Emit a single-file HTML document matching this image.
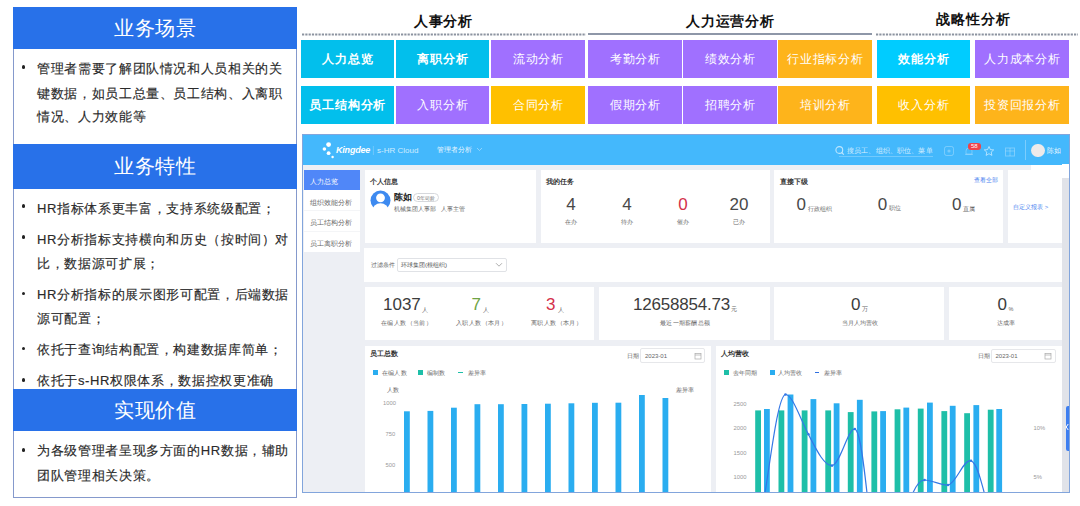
<!DOCTYPE html>
<html><head><meta charset="utf-8">
<style>
*{margin:0;padding:0;box-sizing:border-box}
html,body{width:1080px;height:506px;overflow:hidden;background:#fff;font-family:"Liberation Sans",sans-serif}
.a{position:absolute;white-space:nowrap}
/* left panel */
#lp{position:absolute;left:13px;top:7px;width:284px;height:491px;border:1px solid #8599CC;background:#fff}
.hd{position:absolute;left:13px;width:284px;background:#2871E9;color:#fff;font-size:20px;text-align:center;letter-spacing:0.5px;text-indent:0.5px}
.ln{position:absolute;left:37px;font-size:13px;color:#2a2a2a;-webkit-text-stroke:0.15px #2a2a2a;white-space:nowrap;line-height:16px;height:16px;letter-spacing:0.65px}
.bu{position:absolute;left:21px;width:5px;height:5px}
.bu::before{content:"";position:absolute;left:0.75px;top:-0.75px;width:3.5px;height:3.5px;border-radius:50%;background:#222}
/* tabs */
.sec{position:absolute;top:11px;font-size:14.5px;font-weight:bold;color:#111;text-align:center;white-space:nowrap;line-height:18px}
.tb{position:absolute;height:38px;color:#fff;font-size:12px;text-align:center;line-height:38px;white-space:nowrap;letter-spacing:0.7px;text-indent:0.7px}
.l6{letter-spacing:-0.35px}
.c{background:#02BFEC;font-weight:bold}
.p{background:#A070FF}
.o{background:#FEB41B}
.y{background:#FFC000}
</style></head><body>
<div id="lp"></div>
<div class="hd" style="top:7px;height:42px;line-height:42px">业务场景</div>
<div class="bu" style="top:66px"></div>
<div class="ln" style="top:61px">管理者需要了解团队情况和人员相关的关</div>
<div class="ln" style="top:85.5px">键数据，如员工总量、员工结构、入离职</div>
<div class="ln" style="top:109px">情况、人力效能等</div>

<div class="hd" style="top:144px;height:45px;line-height:45px">业务特性</div>
<div class="bu" style="top:205px"></div>
<div class="ln" style="top:200.5px">HR指标体系更丰富，支持系统级配置；</div>
<div class="bu" style="top:236px"></div>
<div class="ln" style="top:231.5px">HR分析指标支持横向和历史（按时间）对</div>
<div class="ln" style="top:256px">比，数据源可扩展；</div>
<div class="bu" style="top:292.5px"></div>
<div class="ln" style="top:287px">HR分析指标的展示图形可配置，后端数据</div>
<div class="ln" style="top:311px">源可配置；</div>
<div class="bu" style="top:347.5px"></div>
<div class="ln" style="top:342px">依托于查询结构配置，构建数据库简单；</div>
<div class="bu" style="top:379px"></div>
<div class="ln" style="top:373px">依托于s-HR权限体系，数据控权更准确</div>

<div class="hd" style="top:389px;height:42px;line-height:42px">实现价值</div>
<div class="bu" style="top:449px"></div>
<div class="ln" style="top:443px">为各级管理者呈现多方面的HR数据，辅助</div>
<div class="ln" style="top:467.5px">团队管理相关决策。</div>

<!-- section titles -->
<div class="sec" style="left:301px;width:284px;top:12px;font-size:14px;letter-spacing:0.8px;text-indent:0.8px">人事分析</div>
<div class="sec" style="left:588px;width:284px;top:12px;font-size:14px;letter-spacing:0.7px;text-indent:0.7px">人力运营分析</div>
<div class="sec" style="left:877px;width:192px;top:10px;font-size:14px;letter-spacing:0.9px;text-indent:0.9px">战略性分析</div>
<svg class="a" style="left:0;top:0" width="1080" height="40">
<line x1="302" y1="34.5" x2="586" y2="34.5" stroke="#8C93A0" stroke-width="2" stroke-dasharray="2.2 1.1"/>
<line x1="588" y1="34" x2="872" y2="34" stroke="#8E97A8" stroke-width="2"/>
<line x1="876" y1="34.5" x2="1078" y2="34.5" stroke="#8C93A0" stroke-width="2" stroke-dasharray="2.2 1.1"/>
</svg>
<div class="tb c" style="left:301px;top:40px;width:93px">人力总览</div>
<div class="tb c" style="left:396px;top:40px;width:93px">离职分析</div>
<div class="tb p" style="left:491px;top:40px;width:94px">流动分析</div>
<div class="tb p" style="left:588px;top:40px;width:94px">考勤分析</div>
<div class="tb p" style="left:683px;top:40px;width:94px">绩效分析</div>
<div class="tb o" style="left:778px;top:40px;width:94px;letter-spacing:0.8px;text-indent:0.8px">行业指标分析</div>
<div class="tb c" style="left:877px;top:40px;width:93px;background:#00CCFF">效能分析</div>
<div class="tb p" style="left:975px;top:40px;width:94px;letter-spacing:0.8px;text-indent:0.8px">人力成本分析</div>

<div class="tb c" style="left:301px;top:86px;width:93px;letter-spacing:0.8px;text-indent:0.8px">员工结构分析</div>
<div class="tb p" style="left:396px;top:86px;width:93px">入职分析</div>
<div class="tb y" style="left:491px;top:86px;width:94px">合同分析</div>
<div class="tb p" style="left:588px;top:86px;width:94px">假期分析</div>
<div class="tb p" style="left:683px;top:86px;width:94px">招聘分析</div>
<div class="tb o" style="left:778px;top:86px;width:94px">培训分析</div>
<div class="tb y" style="left:877px;top:86px;width:93px">收入分析</div>
<div class="tb o" style="left:975px;top:86px;width:94px;letter-spacing:0.8px;text-indent:0.8px">投资回报分析</div>


<!-- dashboard -->
<div class="a" style="left:302px;top:134px;width:768px;height:359px;background:#EDEFF4;border:1px solid #82A5DC;overflow:hidden">
 <div class="a" style="left:0;top:0;width:766px;height:30px;background:#44B8FC"></div>
 <div class="a" style="left:728px;top:30px;width:38px;height:8px;background:#fff"></div>
</div>
<!-- logo -->
<svg class="a" style="left:318px;top:140px" width="20" height="22">
 <circle cx="10.6" cy="4.6" r="2.4" fill="#fff"/>
 <circle cx="6.4" cy="9" r="1.8" fill="#fff"/>
 <circle cx="10.6" cy="13.2" r="1.9" fill="#fff"/>
 <circle cx="14.6" cy="17" r="1.2" fill="#fff"/>
</svg>
<div class="a" style="left:336px;top:144px;font-size:9px;line-height:12px;font-style:italic;font-weight:bold;color:#fff;letter-spacing:-0.2px">Kingdee</div>
<div class="a" style="left:372px;top:144px;font-size:9px;line-height:12px;color:rgba(255,255,255,.3)">|</div>
<div class="a" style="left:377px;top:144.5px;font-size:8px;line-height:12px;color:rgba(255,255,255,.75)">s-HR Cloud</div>
<div class="a" style="left:437px;top:145px;font-size:6.8px;line-height:10px;color:rgba(255,255,255,.9)">管理者分析</div>
<svg class="a" style="left:476px;top:147px" width="7" height="5"><path d="M1 1 L3.5 3.5 L6 1" stroke="rgba(255,255,255,.5)" fill="none" stroke-width="0.8"/></svg>
<!-- header right -->
<svg class="a" style="left:834px;top:144.5px" width="12" height="12"><circle cx="5.3" cy="5" r="3.4" stroke="rgba(255,255,255,.65)" stroke-width="1.1" fill="none"/><path d="M7.8 7.6 L9.8 9.6" stroke="rgba(255,255,255,.65)" stroke-width="1.2"/></svg>
<div class="a" style="left:847px;top:145.5px;font-size:7px;line-height:10px;letter-spacing:0.15px;color:rgba(255,255,255,.8)">搜员工、组织、职位、菜单</div>
<div class="a" style="left:839px;top:156px;width:94px;height:1px;background:rgba(255,255,255,.25)"></div>
<svg class="a" style="left:943px;top:145px" width="12" height="12"><rect x="1.5" y="1.5" width="9" height="9" rx="2" stroke="rgba(255,255,255,.28)" fill="none" stroke-width="1"/><circle cx="6" cy="6" r="1.6" fill="rgba(255,255,255,.28)"/></svg>
<svg class="a" style="left:963px;top:145px" width="12" height="12"><path d="M3 9 L3 6 Q3 3 6 3 Q9 3 9 6 L9 9 Z M2 9.5 H10" stroke="rgba(255,255,255,.3)" fill="none" stroke-width="0.9"/></svg>
<div class="a" style="left:968px;top:143px;width:12.5px;height:6.5px;background:#F04248;border-radius:3px;color:#fff;font-size:6px;line-height:7px;text-align:center">58</div>
<svg class="a" style="left:983px;top:145px" width="12" height="12"><path d="M6 1.5 L7.4 4.6 L10.7 4.9 L8.2 7.1 L8.9 10.4 L6 8.7 L3.1 10.4 L3.8 7.1 L1.3 4.9 L4.6 4.6 Z" stroke="rgba(255,255,255,.55)" fill="none" stroke-width="1"/></svg>
<svg class="a" style="left:1003.5px;top:145.5px" width="12" height="12"><rect x="1.5" y="2" width="9" height="8" stroke="rgba(255,255,255,.3)" fill="none" stroke-width="1"/><path d="M1.5 5 H10.5 M6 2 V10" stroke="rgba(255,255,255,.3)" stroke-width="0.9"/></svg>
<div class="a" style="left:1024.5px;top:140px;width:1px;height:20px;background:rgba(255,255,255,.3)"></div>
<div class="a" style="left:1031px;top:143.5px;width:13.5px;height:13.5px;border-radius:50%;background:#EEEAEA"></div>
<div class="a" style="left:1046.5px;top:146px;font-size:7px;line-height:9px;color:rgba(255,255,255,.9)">陈如</div>


<style>
.cd{position:absolute;background:#fff}
.t6{font-size:6px;line-height:8px;color:#666}
.t7b{font-size:7px;line-height:9px;color:#333;font-weight:bold}
.num{font-size:17px;line-height:18px;color:#484848;text-align:center}
</style>
<!-- sidebar -->
<div class="cd" style="left:304px;top:170px;width:56px;height:82px"></div>
<div class="a" style="left:304px;top:170px;width:56px;height:20px;background:#5087F8"></div>
<div class="a" style="left:304px;top:210px;width:56px;height:1px;background:#F4F5F7"></div>
<div class="a" style="left:304px;top:231px;width:56px;height:1px;background:#F4F5F7"></div>
<div class="a" style="left:310px;top:177px;font-size:6.8px;line-height:9px;color:#fff">人力总览</div>
<div class="a t6" style="left:310px;top:197.5px;font-size:6.8px;line-height:9px;color:#666">组织效能分析</div>
<div class="a t6" style="left:310px;top:218px;font-size:6.8px;line-height:9px;color:#666">员工结构分析</div>
<div class="a t6" style="left:310px;top:238.5px;font-size:6.8px;line-height:9px;color:#666">员工离职分析</div>
<!-- row 1 cards -->
<div class="cd" style="left:365px;top:170px;width:171px;height:73px"></div>
<div class="cd" style="left:541px;top:170px;width:229px;height:73px"></div>
<div class="cd" style="left:774px;top:170px;width:229px;height:73px"></div>
<div class="cd" style="left:1008px;top:170px;width:54px;height:73px"></div>
<div class="a t7b" style="left:370px;top:177px">个人信息</div>
<svg class="a" style="left:369.5px;top:189.5px" width="21" height="22"><circle cx="10.5" cy="10.5" r="10" fill="#3D8AF0"/><circle cx="10.5" cy="7.8" r="4.4" fill="#fff"/><ellipse cx="10.5" cy="20.5" rx="8.2" ry="7.2" fill="#fff"/></svg>
<div class="a" style="left:394px;top:192px;font-size:9px;line-height:11px;color:#222;font-weight:bold;letter-spacing:-0.5px">陈如</div>
<div class="a" style="left:413px;top:192.5px;width:26px;height:9px;border:0.6px solid #D6D8DC;border-radius:5px;font-size:5.4px;line-height:8px;color:#777;text-align:center">0年司龄</div>
<div class="a" style="left:394px;top:205px;font-size:6px;line-height:8px;color:#666">机械集团人事部&nbsp;&nbsp;&nbsp;人事主管</div>

<div class="a t7b" style="left:546px;top:177px">我的任务</div>
<div class="a num" style="left:556px;top:196px;width:30px">4</div>
<div class="a num" style="left:612px;top:196px;width:30px">4</div>
<div class="a num" style="left:668px;top:196px;width:30px;color:#D4304A">0</div>
<div class="a num" style="left:724px;top:196px;width:30px">20</div>
<div class="a t6" style="left:556px;top:218px;width:30px;text-align:center">在办</div>
<div class="a t6" style="left:612px;top:218px;width:30px;text-align:center">待办</div>
<div class="a t6" style="left:668px;top:218px;width:30px;text-align:center">催办</div>
<div class="a t6" style="left:724px;top:218px;width:30px;text-align:center">已办</div>

<div class="a t7b" style="left:780px;top:177px">直接下级</div>
<div class="a" style="left:974px;top:176px;font-size:6px;line-height:8px;color:#4A7FF0">查看全部</div>
<div class="a num" style="left:796.5px;top:196px;text-align:left">0</div>
<div class="a t6" style="left:808px;top:204.5px">行政组织</div>
<div class="a num" style="left:877.7px;top:196px;text-align:left">0</div>
<div class="a t6" style="left:888.5px;top:204px">职位</div>
<div class="a num" style="left:952px;top:196px;text-align:left">0</div>
<div class="a t6" style="left:963px;top:204.5px">直属</div>
<div class="a" style="left:1013px;top:203px;font-size:6px;line-height:8px;color:#4A7FF0">自定义报表 &gt;</div>

<!-- filter -->
<div class="cd" style="left:364px;top:248px;width:698px;height:34px"></div>
<div class="a t6" style="left:370.5px;top:261px;font-size:6.2px">过滤条件</div>
<div class="a" style="left:397px;top:258px;width:110px;height:14px;border:0.6px solid #E0E2E6;border-radius:2px"></div>
<div class="a t6" style="left:401px;top:261px;font-size:6.2px;color:#555">环球集团(根组织)</div>
<svg class="a" style="left:495px;top:262px" width="8" height="6"><path d="M1 1.2 L4 4.2 L7 1.2" stroke="#999" fill="none" stroke-width="0.8"/></svg>

<!-- KPI -->
<div class="cd" style="left:365px;top:287px;width:229px;height:53px"></div>
<div class="cd" style="left:599px;top:287px;width:171px;height:53px"></div>
<div class="cd" style="left:774px;top:287px;width:170px;height:53px"></div>
<div class="cd" style="left:949px;top:287px;width:113px;height:53px"></div>


<!-- KPI content -->
<div class="a" style="left:383px;top:296px;font-size:17px;line-height:18px;color:#3c3c3c">1037</div>
<div class="a t6" style="left:422px;top:305.5px;font-size:6px">人</div>
<div class="a t6" style="left:381px;top:319px;font-size:6px;letter-spacing:0.4px">在编人数（当前）</div>
<div class="a" style="left:471.5px;top:296px;font-size:17px;line-height:18px;color:#6FA343">7</div>
<div class="a t6" style="left:483px;top:305.5px;font-size:6px">人</div>
<div class="a t6" style="left:456px;top:319px;font-size:6px;letter-spacing:0.4px">入职人数（本月）</div>
<div class="a" style="left:546px;top:296px;font-size:17px;line-height:18px;color:#D4304A">3</div>
<div class="a t6" style="left:558px;top:305.5px;font-size:6px">人</div>
<div class="a t6" style="left:531px;top:319px;font-size:6px;letter-spacing:0.4px">离职人数（本月）</div>

<div class="a" style="left:633px;top:296px;font-size:17px;line-height:18px;color:#3c3c3c;letter-spacing:-0.2px">12658854.73</div>
<div class="a t6" style="left:731px;top:305px;font-size:6px">元</div>
<div class="a t6" style="left:660px;top:319px;font-size:6px;letter-spacing:0.3px">最近一期薪酬总额</div>

<div class="a" style="left:851px;top:296px;font-size:17px;line-height:18px;color:#3c3c3c">0</div>
<div class="a t6" style="left:862px;top:305px;font-size:6px">万</div>
<div class="a t6" style="left:842px;top:319px;font-size:6px">当月人均营收</div>
<div class="a" style="left:997.5px;top:296px;font-size:17px;line-height:18px;color:#3c3c3c">0</div>
<div class="a t6" style="left:1008.5px;top:305px;font-size:5.5px">%</div>
<div class="a t6" style="left:997px;top:319px;font-size:6px">达成率</div>

<!-- charts -->
<div class="cd" style="left:365px;top:346px;width:346px;height:146px"></div>
<div class="cd" style="left:716px;top:346px;width:346px;height:146px"></div>
<div class="a t7b" style="left:370px;top:348.5px">员工总数</div>
<div class="a t7b" style="left:721px;top:348.5px">人均营收</div>
<!-- legend 1 -->
<div class="a" style="left:372.5px;top:370px;width:5px;height:5px;background:#2AADF0"></div>
<div class="a t6" style="left:381.5px;top:368.5px;color:#666;letter-spacing:0.4px">在编人数</div>
<div class="a" style="left:418px;top:370px;width:5px;height:5px;background:#1EBFA8"></div>
<div class="a t6" style="left:427px;top:368.5px;color:#666">编制数</div>
<div class="a" style="left:458px;top:372px;width:4.5px;height:1.3px;background:#1EBFA8"></div>
<div class="a t6" style="left:467.5px;top:368.5px;color:#666">差异率</div>
<div class="a t6" style="left:387px;top:385.5px;color:#666">人数</div>
<div class="a t6" style="left:676px;top:385.5px;color:#666">差异率</div>
<div class="a t6" style="left:383px;top:398.5px;color:#999;font-size:5.8px">1000</div>
<div class="a t6" style="left:385.5px;top:430px;color:#999;font-size:5.8px">750</div>
<div class="a t6" style="left:385.5px;top:460.5px;color:#999;font-size:5.8px">500</div>
<div class="a t6" style="left:627px;top:352px;color:#666">日期</div>
<div class="a" style="left:640px;top:348px;width:65px;height:14.5px;border:0.6px solid #E6E7EA;border-radius:2px"></div>
<div class="a t6" style="left:645px;top:352px;color:#666">2023-01</div>
<svg class="a" style="left:694px;top:352px" width="8" height="8"><rect x="1" y="1.5" width="6" height="5.5" stroke="#AAA" fill="none" stroke-width="0.7"/><path d="M1 3 H7" stroke="#AAA" stroke-width="0.7"/></svg>
<svg class="a" style="left:365px;top:346px" width="346" height="146">
 <g fill="#2AADF0">
 <rect x="39.0" y="65.3" width="5.8" height="120"/>
 <rect x="62.5" y="64.9" width="5.8" height="120"/>
 <rect x="86.0" y="61.7" width="5.8" height="120"/>
 <rect x="109.5" y="58.2" width="5.8" height="120"/>
 <rect x="133.0" y="58.2" width="5.8" height="120"/>
 <rect x="156.5" y="58" width="5.8" height="120"/>
 <rect x="180.0" y="57.7" width="5.8" height="120"/>
 <rect x="203.5" y="57.3" width="5.8" height="120"/>
 <rect x="227.0" y="56.8" width="5.8" height="120"/>
 <rect x="250.5" y="56.7" width="5.8" height="120"/>
 <rect x="274.0" y="49" width="5.8" height="120"/>
 <rect x="297.5" y="52" width="5.8" height="120"/>
 </g>
</svg>
<!-- legend 2 -->
<div class="a" style="left:724px;top:370px;width:5px;height:5px;background:#1EBFA8"></div>
<div class="a t6" style="left:733px;top:368.5px;color:#666">去年同期</div>
<div class="a" style="left:769.5px;top:370px;width:5px;height:5px;background:#2AADF0"></div>
<div class="a t6" style="left:778px;top:368.5px;color:#666">人均营收</div>
<div class="a" style="left:814.5px;top:372px;width:4.5px;height:1.3px;background:#2F6FE0"></div>
<div class="a t6" style="left:824px;top:368.5px;color:#666">差异率</div>
<div class="a t6" style="left:733.5px;top:399.5px;color:#999;font-size:5.8px">2500</div>
<div class="a t6" style="left:733.5px;top:424px;color:#999;font-size:5.8px">2000</div>
<div class="a t6" style="left:733.5px;top:448.5px;color:#999;font-size:5.8px">1500</div>
<div class="a t6" style="left:733.5px;top:473px;color:#999;font-size:5.8px">1000</div>
<div class="a t6" style="left:1033.5px;top:424px;color:#999;font-size:5.8px">10%</div>
<div class="a t6" style="left:1033.5px;top:473px;color:#999;font-size:5.8px">5%</div>
<div class="a t6" style="left:978px;top:351.5px;color:#666">日期</div>
<div class="a" style="left:991px;top:348.5px;width:65px;height:14px;border:0.6px solid #E6E7EA;border-radius:2px"></div>
<div class="a t6" style="left:995.5px;top:351.5px;color:#666">2023-01</div>
<svg class="a" style="left:1044px;top:351.5px" width="8" height="8"><rect x="1" y="1.5" width="6" height="5.5" stroke="#AAA" fill="none" stroke-width="0.7"/><path d="M1 3 H7" stroke="#AAA" stroke-width="0.7"/></svg>
<svg class="a" style="left:716px;top:346px" width="346" height="146">
 <g fill="#1EBFA8">
 <rect x="39.2" y="64.4" width="5.8" height="120"/>
 <rect x="62.5" y="64.4" width="5.8" height="120"/>
 <rect x="85.7" y="64.4" width="5.8" height="120"/>
 <rect x="109.3" y="64.4" width="5.8" height="120"/>
 <rect x="131.8" y="66.1" width="5.8" height="120"/>
 <rect x="155.4" y="65.4" width="5.8" height="120"/>
 <rect x="178.6" y="63.3" width="5.8" height="120"/>
 <rect x="201.8" y="62.6" width="5.8" height="120"/>
 <rect x="225.4" y="65.1" width="5.8" height="120"/>
 <rect x="248.2" y="67.2" width="5.8" height="120"/>
 <rect x="271.8" y="63.7" width="5.8" height="120"/>
 </g>
 <g fill="#2AADF0">
 <rect x="48" y="63" width="5.8" height="120"/>
 <rect x="71.6" y="48.5" width="5.8" height="120"/>
 <rect x="94.5" y="53.1" width="5.8" height="120"/>
 <rect x="117.7" y="57.3" width="5.8" height="120"/>
 <rect x="140.9" y="53.8" width="5.8" height="120"/>
 <rect x="164.2" y="65.1" width="5.8" height="120"/>
 <rect x="187.4" y="61.6" width="5.8" height="120"/>
 <rect x="211" y="56.6" width="5.8" height="120"/>
 <rect x="233.8" y="59.8" width="5.8" height="120"/>
 <rect x="257.4" y="59.1" width="5.8" height="120"/>
 <rect x="280.3" y="63" width="5.8" height="120"/>
 </g>
 <path d="M49 147 C 55 110, 62 50, 69.5 48.5 C 76 48, 84 72, 92.4 88.3 C 100 103, 108 120, 116 119.6 C 124 119, 132 82, 138.8 83 C 144 84, 148 120, 151 147" stroke="#3478E6" stroke-width="1.2" fill="none"/>
 <path d="M196.9 147 C 200 140, 204 134, 208.5 134 C 216 134, 226 140, 232 139 C 240 138, 248 112, 255 114.7 C 261 117, 265 135, 268.3 147" stroke="#3478E6" stroke-width="1.2" fill="none"/>
 <g fill="#3478E6"><circle cx="69.5" cy="48.5" r="1.3"/><circle cx="92.4" cy="88.3" r="1.3"/><circle cx="116" cy="119.6" r="1.3"/><circle cx="138.8" cy="83" r="1.3"/><circle cx="208.5" cy="134" r="1.3"/><circle cx="232" cy="139" r="1.3"/><circle cx="255" cy="114.7" r="1.3"/></g>
</svg>
<!-- scrollbar + tab -->
<div class="a" style="left:1062px;top:178px;width:7px;height:314px;background:#E1E3E9"></div>
<div class="a" style="left:1062px;top:164px;width:7px;height:14px;background:#fff"></div>
<div class="a" style="left:1065.5px;top:406px;width:3.5px;height:45px;background:#3D7EF0;border-radius:2px 0 0 2px"></div>
<svg class="a" style="left:1065px;top:423px" width="4" height="8"><path d="M3.2 1 L1.2 4 L3.2 7" stroke="#fff" stroke-width="1" fill="none"/></svg>

</body></html>
